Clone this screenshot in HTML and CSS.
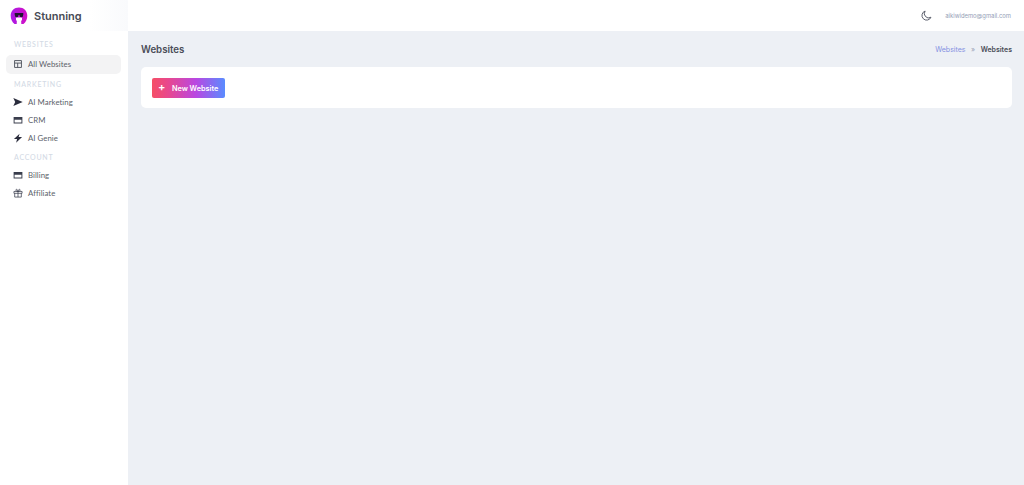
FILE: index.html
```html
<!DOCTYPE html>
<html lang="en">
<head>
<meta charset="utf-8">
<title>Websites</title>
<link rel="stylesheet" href="styles.css">
</head>
<body>
<div class="app">
  <aside class="sidebar">
    <div class="brand">
      <svg class="logo" viewBox="0 0 18 18" width="18" height="18">
        <defs>
          <linearGradient id="logo-fill" x1="0" y1="0" x2="1" y2="0">
            <stop offset="0" stop-color="#a81be6"/>
            <stop offset="1" stop-color="#d40fc4"/>
          </linearGradient>
        </defs>
        <path d="M9 .5C4.200.5.700 4 .700 8.700c0 3.500 1.500 6.400 3.800 8.300h2.200l.2-4.500h4.200l.2 4.500h2.200c2.300-1.900 3.800-4.800 3.800-8.300C17.300 4 13.800.5 9 .5z" fill="url(#logo-fill)"/>
        <path d="M6 10.500h6v3H6z" fill="#fff"/>
        <path d="M4.700 5.900h8.600v1.500l-.6 2.300c-.2.600-2.300.600-2.700 0L9.500 8.100h-1L8 9.700c-.4.600-2.500.600-2.700 0l-.6-2.300z" fill="#1f1630"/>
      </svg>
      <span class="brand-name">Stunning</span>
    </div>
    <nav class="nav">
      <div class="section">WEBSITES</div>
      <a class="item active">
        <svg class="icon" viewBox="0 0 16 16"><path d="M2.500 2.500h11v11h-11zM2.500 6.500h11M7.500 6.500v7" fill="none" stroke="#50545f" stroke-width="1.500"/></svg>
        <span>All Websites</span>
      </a>
      <div class="section">MARKETING</div>
      <a class="item">
        <svg class="icon" viewBox="0 0 16 16"><path d="M.5 1.500L15.500 8 .5 14.500 3.500 8z" fill="#2a2c3c"/></svg>
        <span>AI Marketing</span>
      </a>
      <a class="item">
        <svg class="icon" viewBox="0 0 16 16"><path d="M1 3h14v10.500H1zM2.500 7.500v4.500h11V7.500z" fill="#3a3e4d" fill-rule="evenodd"/></svg>
        <span>CRM</span>
      </a>
      <a class="item">
        <svg class="icon" viewBox="0 0 16 16"><path d="M10.500 1L1.500 9.500h5L5 15.500l9.500-9.200H9z" fill="#2a2c3c"/></svg>
        <span>AI Genie</span>
      </a>
      <div class="section">ACCOUNT</div>
      <a class="item">
        <svg class="icon" viewBox="0 0 16 16"><path d="M1 3h14v10.500H1zM2.500 7.500v4.500h11V7.500z" fill="#3a3e4d" fill-rule="evenodd"/></svg>
        <span>Billing</span>
      </a>
      <a class="item">
        <svg class="icon" viewBox="0 0 16 16"><path d="M1.500 5.500h13v3h-13zM2.700 8.500v6h10.600v-6M8 5.500v9M8 5.500C5.800 5.500 4.400 4.400 4.700 3 5 1.400 7.500 1.800 8 5.500zM8 5.500c2.200 0 3.600-1.100 3.300-2.500C11 1.400 8.500 1.800 8 5.500z" fill="none" stroke="#3a3e4d" stroke-width="1.200"/></svg>
        <span>Affiliate</span>
      </a>
    </nav>
  </aside>
  <div class="main">
    <header class="topbar">
      <svg class="moon" viewBox="0 0 16 16"><path d="M6 1.500A6.800 6.800 0 1 0 14.500 10.500 6.300 6.300 0 0 1 6 1.500z" fill="none" stroke="#565b68" stroke-width="1.400" stroke-linejoin="round"/></svg>
      <span class="email">aikiwidemo@gmail.com</span>
    </header>
    <main class="content">
      <div class="page-head">
        <h1 class="title">Websites</h1>
        <div class="crumbs">
          <span class="crumb-link">Websites</span>
          <span class="crumb-sep">»</span>
          <span class="crumb-current">Websites</span>
        </div>
      </div>
      <section class="card">
        <button class="btn" type="button"><span class="plus">+</span><span>New Website</span></button>
      </section>
    </main>
  </div>
</div>
</body>
</html>
```
FILE: styles.css
```css
* { box-sizing: border-box; }
html, body { margin: 0; height: 100%; }
body { font-family: Inter, "Liberation Sans", sans-serif; background: #edf0f5; color: #3f4350; overflow: hidden; }
.app { display: flex; height: 485px; }
.sidebar { width: 128px; flex: none; background: #fff; }
.brand { height: 31px; display: flex; align-items: center; gap: 6px; padding-left: 10px; background: linear-gradient(90deg, #fff 70%, #f9fafc); }
.logo { flex: none; }
.brand-name { font-size: 11px; font-weight: 600; color: #484b55; }
.nav { padding: 6px 7px 0 6px; display: flex; flex-direction: column; }
.section { height: 16px; line-height: 15px; padding-left: 8px; font-family: Lato, sans-serif; font-size: 7px; font-weight: 500; letter-spacing: .75px; color: #d3dae5; margin-bottom: 2px; }
.nav .item + .section { margin-top: 2px; margin-bottom: 1px; height: 16px; line-height: 17px; }
.item { height: 18px; display: flex; align-items: center; gap: 5px; padding-left: 7px; font-family: Lato, sans-serif; font-size: 7.800px; letter-spacing: .05px; color: #5b5f6a; border-radius: 5px; }
.item.active { background: #f3f3f4; height: 19px; padding-bottom: 1px; }
.icon { width: 10px; height: 10px; flex: none; }
.main { flex: 1; display: flex; flex-direction: column; min-width: 0; }
.topbar { height: 31px; flex: none; background: #fff; display: flex; align-items: center; justify-content: flex-end; padding-right: 13px; gap: 13px; }
.moon { width: 11px; height: 11px; }
.email { font-size: 5.900px; color: #94a0b6; }
.content { flex: 1; padding: 0 12px 0 13px; }
.page-head { height: 36px; display: flex; align-items: center; justify-content: space-between; }
.title { margin: 0; font-size: 9.700px; font-weight: 600; color: #4a4d58; }
.crumbs { display: flex; align-items: center; gap: 5.500px; font-size: 7px; }
.crumb-link { color: #8490e2; }
.crumb-sep { color: #9aa3b5; }
.crumb-current { color: #4a4d58; font-weight: 600; }
.card { background: #fff; border-radius: 5px; height: 41px; padding: 11px; display: flex; align-items: flex-start; }
.btn { height: 20px; width: 73px; border: 0; border-radius: 2px; background: linear-gradient(90deg, #f54f66, #e8488e 22%, #b947e2 60%, #5a8cff); color: #fff; font-family: inherit; font-size: 7.300px; font-weight: 600; display: flex; align-items: center; padding: 0 0 0 6px; gap: 6.500px; }
.plus { font-size: 11px; line-height: 1; padding-bottom: 2px; }
```
